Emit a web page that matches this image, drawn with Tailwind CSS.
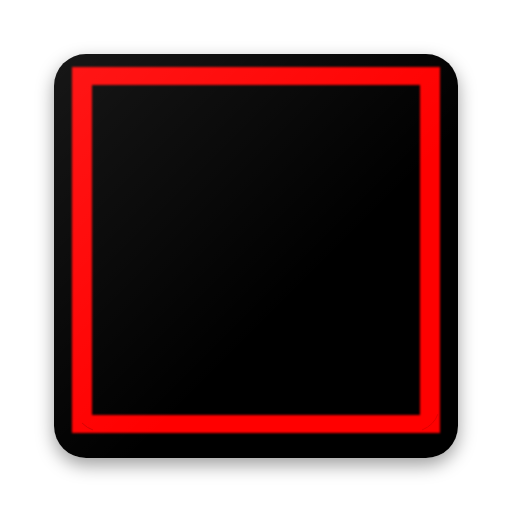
<!DOCTYPE html>
<html lang="en">
<head>
    <meta charset="UTF-8">
    <title>App icon</title>
    <script src="https://cdn.jsdelivr.net/npm/@tailwindcss/browser@4"></script>
</head>
<body class="bg-white w-[512px] h-[512px] flex items-center justify-center overflow-hidden">
    <div class="relative w-[404px] h-[404px] rounded-[32px] shadow-[0_7px_18px_rgba(0,0,0,0.38)]">
        <div class="w-full h-full rounded-[32px] bg-black overflow-hidden pt-[13px] px-[18px] pb-[25px] flex">
            <div class="flex-1 bg-black border-x-[20px] border-y-[18px] border-[#ff0000] blur-[1px]"></div>
        </div>
        <!-- faint arcs in the bottom corners of the frame -->
        <svg class="absolute inset-0 blur-[0.5px]" width="404" height="404" viewBox="0 0 404 404" fill="none">
            <path d="M28 369Q33 374 39 376" stroke="#d40000" stroke-width="1"/>
            <path d="M384 360Q380 371 368 376" stroke="#e00000" stroke-width="1"/>
        </svg>
        <!-- sheen over the icon -->
        <div class="absolute inset-0 rounded-[32px] bg-linear-to-br from-white/[0.09] to-transparent to-60%"></div>
    </div>
</body>
</html>
